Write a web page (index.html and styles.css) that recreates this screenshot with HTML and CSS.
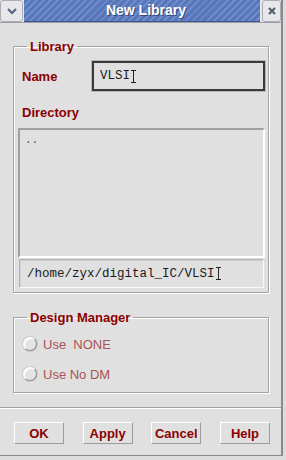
FILE: index.html
```html
<!DOCTYPE html>
<html lang="en">

<head>
    <meta charset="UTF-8">
    <meta name="viewport" content="width=device-width, initial-scale=1.0">
    <title>New Library</title>
    <link rel="stylesheet" href="styles.css">
</head>

<body>
    <div class="window">
        <div class="titlebar">
            <div class="tb-btn menu">
                <svg width="12" height="8" viewBox="0 0 12 8"><path d="M2 2 L6 6 L10 2" fill="none" stroke="#56667f" stroke-width="2.2"/></svg>
            </div>
            <div class="title">New Library</div>
            <div class="tb-btn close">
                <svg width="10" height="10" viewBox="0 0 10 10"><path d="M2 2 L8 8 M8 2 L2 8" fill="none" stroke="#55606f" stroke-width="2.2"/></svg>
            </div>
        </div>

        <div class="content">
            <fieldset class="group lib">
                <legend>Library</legend>
                <div class="name-row">
                    <span class="label">Name</span>
                    <div class="entry name-entry">VLSI<span class="caret"></span></div>
                </div>
                <div class="label dir-label">Directory</div>
                <div class="dir-list">..</div>
                <div class="entry path-entry">/home/zyx/digital_IC/VLSI<span class="caret"></span></div>
            </fieldset>

            <fieldset class="group dm">
                <legend>Design Manager</legend>
                <div class="radio first"><span class="dot"></span>Use&nbsp; NONE</div>
                <div class="radio"><span class="dot"></span>Use No DM</div>
            </fieldset>
        </div>

        <div class="actions">
            <button class="btn">OK</button>
            <button class="btn">Apply</button>
            <button class="btn">Cancel</button>
            <button class="btn">Help</button>
        </div>
    </div>
</body>

</html>
```

FILE: styles.css
```css
body {
    margin: 0;
    background: #dcdcdc;
    font-family: "Liberation Sans", Arial, sans-serif;
}

.window {
    width: 283px;
    height: 456px;
    box-sizing: border-box;
    background: #e0e0e0;
    border-right: 2px solid #8a8a8a;
    border-bottom: 1px solid #8a8a8a;
    display: flex;
    flex-direction: column;
}

/* title bar */
.titlebar {
    height: 22px;
    display: flex;
    border-bottom: 1px solid #9a9ea6;
    background: #e6e6e6;
}

.tb-btn {
    width: 21px;
    height: 20px;
    display: flex;
    align-items: center;
    justify-content: center;
    background: #e8e8ea;
    border: 1px solid #a9adb5;
    border-radius: 3px;
}

.title {
    flex: 1;
    margin: 0 2px 0 1px;
    background: repeating-linear-gradient(135deg, #5877ba 0px, #5877ba 3px, #6e8cca 3px, #6e8cca 5px);
    border-bottom: 1px solid #3e5590;
    color: #fff;
    font-weight: bold;
    font-size: 14px;
    line-height: 21px;
    text-align: center;
    padding-left: 8px;
    text-shadow: 1px 1px 0 #34477a;
}

.close {
    width: 17px;
}

/* dialog body */
.content {
    padding: 16px 12px 0 13px;
    height: 384px;
    box-sizing: border-box;
    flex-shrink: 0;
}

.group {
    margin: 0;
    padding: 0;
    border: 1px solid #a4a4a4;
    box-shadow: 1px 1px 0 #fff, inset 1px 1px 0 #fff;
}

.group legend {
    margin-left: 13px;
    padding: 0 3px;
    font-size: 13px;
    line-height: 15px;
    font-weight: bold;
    color: #8b0000;
}

.label {
    font-size: 13px;
    font-weight: bold;
    color: #8b0000;
}

.name-row {
    display: flex;
    align-items: center;
    margin-top: 7px;
    padding-left: 8px;
    height: 30px;
}

.name-row .label {
    width: 70px;
}

.entry {
    font-family: "Liberation Mono", "Courier New", monospace;
    font-size: 12.5px;
    color: #1a1a1a;
    display: flex;
    align-items: center;
    box-sizing: border-box;
}

.name-entry {
    width: 173px;
    height: 30px;
    border: 2px solid #3a3a3a;
    box-shadow: 0 0 0 1px #b8b8b8;
    padding-left: 6px;
}

.caret {
    display: inline-block;
    width: 5px;
    height: 13px;
    margin-left: 1px;
    background:
        linear-gradient(#222, #222) center / 1px 100% no-repeat,
        linear-gradient(#222, #222) top / 5px 1px no-repeat,
        linear-gradient(#222, #222) bottom / 5px 1px no-repeat;
}

.dir-label {
    margin-top: 14px;
    padding-left: 8px;
    line-height: 15px;
}

.dir-list {
    margin: 8px 0 0 4px;
    width: 247px;
    height: 130px;
    box-sizing: border-box;
    border: 2px solid;
    border-color: #a0a0a0 #fff #fff #a0a0a0;
    padding: 4px 5px;
    font-family: "Liberation Mono", monospace;
    font-size: 11px;
    line-height: 12px;
    color: #444;
}

.path-entry {
    margin: 1px 0 4px 5px;
    width: 245px;
    height: 29px;
    border: 1px solid;
    border-color: #b4b4b4 #fafafa #fafafa #b4b4b4;
    box-shadow: inset 1px 1px 0 #cfcfcf;
    padding-left: 7px;
}

.dm {
    margin-top: 17px;
    padding-bottom: 8px;
}

.radio {
    display: flex;
    align-items: center;
    height: 20px;
    margin-top: 10px;
    padding-left: 9px;
    font-size: 13px;
    color: #a85454;
}

.radio.first {
    margin-top: 9px;
}

.dot {
    width: 12px;
    height: 12px;
    border-radius: 50%;
    border: 1px solid;
    border-color: #fff #8e8e8e #8e8e8e #fff;
    box-shadow: inset 1px 1px 0 #fff, 0 0 0 1px #c8c8c8;
    background: #e4e4e4;
    margin-right: 6px;
}

/* bottom buttons */
.actions {
    flex: 1;
    border-top: 1px solid #a0a0a0;
    box-shadow: inset 0 1px 0 #fff;
    display: flex;
    justify-content: space-between;
    align-items: flex-start;
    padding: 14px 11px 0 14px;
}

.btn {
    width: 50px;
    height: 22px;
    padding: 0;
    background: #e0e0e0;
    border: 1px solid;
    border-color: #fff #9c9c9c #9c9c9c #fff;
    font-family: "Liberation Sans", Arial, sans-serif;
    font-size: 13px;
    font-weight: bold;
    color: #8b0000;
}
```
